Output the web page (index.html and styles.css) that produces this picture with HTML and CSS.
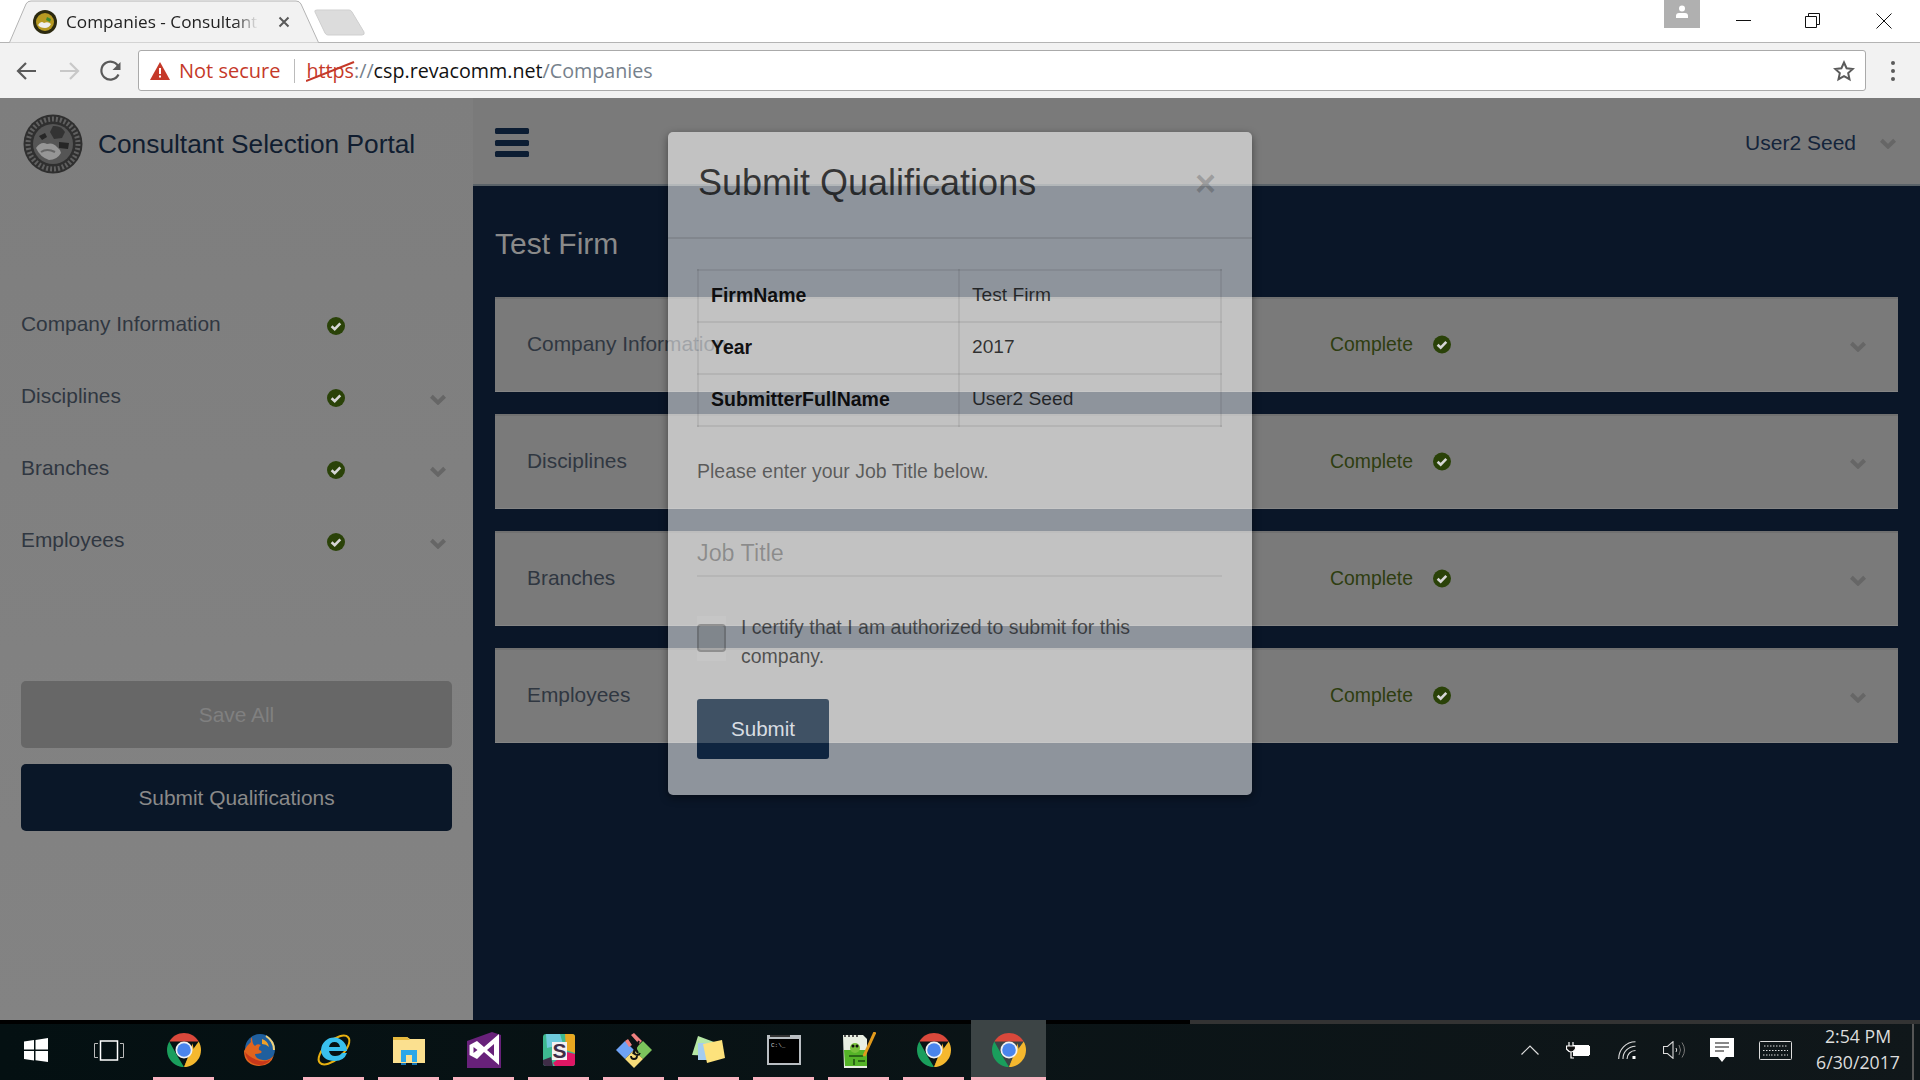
FILE: index.html
```html
<!DOCTYPE html>
<html lang="en">
<head>
    <meta charset="UTF-8">
    <title>Companies - Consultant Selection Portal</title>
    <link rel="stylesheet" href="styles.css">
</head>

<body>
    <!-- shared icons -->
    <svg class="defs" width="0" height="0">
        <symbol id="check" viewBox="0 0 18 18">
            <circle cx="9" cy="9" r="9" fill="#2a4208"/>
            <path d="M4.6 9.2l3.1 3 5.6-5.8" fill="none" stroke="#d6d6d6" stroke-width="2.6"/>
        </symbol>
        <symbol id="chev" viewBox="0 0 16 11">
            <path d="M1.4 2.2L8 8.600l6.600-6.400" fill="none" stroke="#666" stroke-width="4"/>
        </symbol>
        <symbol id="chrome" viewBox="0 0 40 40">
            <path d="M2.7 10a20 20 0 0 1 34.6 0H20z" fill="#d9483b"/>
            <path d="M37.3 10A20 20 0 0 1 20 40l10-20z" fill="#f5b82e"/>
            <path d="M20 40A20 20 0 0 1 2.7 10l10 18z" fill="#1a9e5c"/>
            <path d="M11 15h20l-11 6z" fill="#d9483b"/>
            <path d="M30 12l2 10-12 18 8-20z" fill="#f5b82e"/>
            <circle cx="20" cy="20" r="10" fill="#f2f2f2"/>
            <circle cx="20" cy="20" r="8" fill="#4a85ec"/>
        </symbol>
    </svg>

    <div class="screen">
        <!-- browser chrome -->
        <div class="tabstrip">
            <div class="tab">
                <svg class="tab-shape" width="310" height="43" viewBox="0 0 310 43">
                    <path d="M0.5 42.5L17 4Q18.500 1 22 1H287Q290.500 1 292 4L309.500 42.500" fill="#f2f2f2" stroke="#b4b4b4"/>
                </svg>
                <svg class="favicon" width="24" height="24" viewBox="0 0 24 24">
                    <circle cx="12" cy="12" r="12" fill="#2c2a10"/>
                    <circle cx="12" cy="12" r="9" fill="#b79a22"/>
                    <path d="M5 15q3-5 6-2 4-2 7 1-2 4-6 4-5 0-7-3z" fill="#eee"/>
                    <path d="M14 7l4 2-1 3-4-2z" fill="#3c8a32"/>
                </svg>
                <span class="tab-title">Companies - Consultant Selection Portal</span>
                <svg class="tab-x" width="12" height="12" viewBox="0 0 12 12">
                    <path d="M1.500 1.500l9 9M10.500 1.500l-9 9" stroke="#5a5a5a" stroke-width="2"/>
                </svg>
            </div>
            <svg class="newtab" width="52" height="27" viewBox="0 0 52 27">
                <path d="M3 1H35Q37 1 38 3L50 23Q51 26 48 26H14Q12 26 11 24L1 3Q0 1 3 1z" fill="#dcdcdc" stroke="#cfcfcf"/>
            </svg>
            <div class="win-controls">
                <div class="profile">
                    <svg width="16" height="16" viewBox="0 0 16 16">
                        <circle cx="8" cy="4.500" r="3" fill="#fff"/>
                        <path d="M2 14v-2q0-3 3-3h6q3 0 3 3v2z" fill="#fff"/>
                    </svg>
                </div>
                <svg class="win-btn" width="16" height="16" viewBox="0 0 16 16"><path d="M0 7.500h15" stroke="#111"/></svg>
                <svg class="win-btn" width="16" height="16" viewBox="0 0 16 16"><path d="M.5 3.500h11v11H.5zM3.500 3.500v-3h11v11h-3" fill="none" stroke="#111"/></svg>
                <svg class="win-btn" width="16" height="16" viewBox="0 0 16 16"><path d="M.5.500l15 15M15.500.500l-15 15" stroke="#111"/></svg>
            </div>
        </div>

        <div class="toolbar">
            <svg class="nav-btn" width="42" height="24" viewBox="0 0 42 24"><path d="M30 12H13M20 4l-8 8 8 8" fill="none" stroke="#5a5a5a" stroke-width="2.200"/></svg>
            <svg class="nav-btn" width="42" height="24" viewBox="0 0 42 24"><path d="M12 12h17M22 4l8 8-8 8" fill="none" stroke="#c8c8c8" stroke-width="2.200"/></svg>
            <svg class="nav-btn" width="42" height="24" viewBox="0 0 42 24"><path d="M28.500 15.500a9 9 0 1 1 .5-6.500" fill="none" stroke="#5a5a5a" stroke-width="2.200"/><path d="M30.500 3v8h-8z" fill="#5a5a5a"/></svg>
            <div class="omnibox">
                <svg class="warn" width="20" height="18" viewBox="0 0 20 18"><path d="M10 0l10 18H0z" fill="#c53929"/><path d="M9 6h2v6H9zM9 13.500h2v2H9z" fill="#fff"/></svg>
                <span class="not-secure">Not secure</span>
                <span class="omni-sep"></span>
                <span class="url">
                    <span class="url-https">https</span><span class="url-dim">://</span><span class="url-host">csp.revacomm.net</span><span class="url-dim">/Companies</span>
                    <svg class="url-strike" width="50" height="22" viewBox="0 0 50 22"><path d="M0 20L48 1" stroke="#c53929" stroke-width="2"/></svg>
                </span>
                <svg class="star" width="22" height="22" viewBox="0 0 22 22"><path d="M11 2.500l2.600 5.700 6.200.7-4.600 4.200 1.300 6.100L11 16.100l-5.500 3.100 1.300-6.100-4.600-4.200 6.200-.7z" fill="none" stroke="#5a5a5a" stroke-width="2"/></svg>
            </div>
            <div class="menu-dots"><i></i><i></i><i></i></div>
        </div>

        <!-- the page, dimmed by the modal -->
        <div class="app">
            <aside class="sidebar">
                <div class="brand">
                    <svg class="seal" width="60" height="60" viewBox="0 0 60 60">
                        <circle cx="30" cy="30" r="29.500" fill="#2f2f2f"/>
                        <circle cx="30" cy="30" r="25" fill="none" stroke="#606060" stroke-width="5" stroke-dasharray="2 2"/>
                        <circle cx="30" cy="30" r="20" fill="#555"/>
                        <path d="M30 12q8-1 12 6l-3 6-8 1-4-7z" fill="#333"/>
                        <path d="M36 28l10 1-1 6-9-1zM16 22l6-3 2 4-5 3z" fill="#262626"/>
                        <path d="M13 34q5-7 11-4 6-2 10 3 3 2 4 6-4 7-12 7-9-3-13-12z" fill="#969696"/>
                        <path d="M18 38q6-4 14 0" fill="none" stroke="#666" stroke-width="2"/>
                    </svg>
                    <span class="brand-name">Consultant Selection Portal</span>
                </div>
                <ul class="steps">
                    <li class="step">
                        <span>Company Information</span>
                        <svg class="ico-check" width="18" height="18"><use href="#check"/></svg>
                    </li>
                    <li class="step">
                        <span>Disciplines</span>
                        <svg class="ico-check" width="18" height="18"><use href="#check"/></svg>
                        <svg class="ico-chev" width="16" height="11"><use href="#chev"/></svg>
                    </li>
                    <li class="step">
                        <span>Branches</span>
                        <svg class="ico-check" width="18" height="18"><use href="#check"/></svg>
                        <svg class="ico-chev" width="16" height="11"><use href="#chev"/></svg>
                    </li>
                    <li class="step">
                        <span>Employees</span>
                        <svg class="ico-check" width="18" height="18"><use href="#check"/></svg>
                        <svg class="ico-chev" width="16" height="11"><use href="#chev"/></svg>
                    </li>
                </ul>
                <div class="side-actions">
                    <div class="side-btn side-btn-off">Save All</div>
                    <div class="side-btn side-btn-on">Submit Qualifications</div>
                </div>
            </aside>

            <main class="content">
                <header class="topbar">
                    <div class="burger"><i></i><i></i><i></i></div>
                    <div class="user">
                        <span>User2 Seed</span>
                        <svg width="16" height="11"><use href="#chev"/></svg>
                    </div>
                </header>
                <div class="content-body">
                    <h1 class="firm">Test Firm</h1>
                    <div class="card">
                        <span>Company Information</span>
                        <span class="status">Complete <svg width="18" height="19"><use href="#check"/></svg></span>
                        <svg class="card-chev" width="16" height="11"><use href="#chev"/></svg>
                    </div>
                    <div class="card">
                        <span>Disciplines</span>
                        <span class="status">Complete <svg width="18" height="19"><use href="#check"/></svg></span>
                        <svg class="card-chev" width="16" height="11"><use href="#chev"/></svg>
                    </div>
                    <div class="card">
                        <span>Branches</span>
                        <span class="status">Complete <svg width="18" height="19"><use href="#check"/></svg></span>
                        <svg class="card-chev" width="16" height="11"><use href="#chev"/></svg>
                    </div>
                    <div class="card">
                        <span>Employees</span>
                        <span class="status">Complete <svg width="18" height="19"><use href="#check"/></svg></span>
                        <svg class="card-chev" width="16" height="11"><use href="#chev"/></svg>
                    </div>
                </div>
            </main>

            <!-- modal -->
            <div class="modal">
                <div class="modal-head">
                    <h2>Submit Qualifications</h2>
                    <span class="modal-x">&times;</span>
                </div>
                <div class="modal-body">
                    <table class="summary">
                        <tr><th>FirmName</th><td>Test Firm</td></tr>
                        <tr><th>Year</th><td>2017</td></tr>
                        <tr><th>SubmitterFullName</th><td>User2 Seed</td></tr>
                    </table>
                    <p class="hint">Please enter your Job Title below.</p>
                    <div class="job-input">Job Title</div>
                    <div class="certify">
                        <span class="box-wrap"><span class="box"></span></span>
                        <span class="certify-text">I certify that I am authorized to submit for this company.</span>
                    </div>
                    <div class="submit-btn">Submit</div>
                </div>
            </div>
        </div>

        <!-- windows taskbar -->
        <div class="taskbar">
            <div class="tb-edge"></div>
            <div class="tb-row">
                <div class="tb-start">
                    <svg width="24" height="24" viewBox="0 0 24 24"><path d="M0 3.500l10-1.400v9.400H0zM11.500 1.900L24 0v11.500H11.500zM0 13h10v9.400L0 21zM11.500 13H24v11l-12.500-1.800z" fill="#fff"/></svg>
                </div>
                <div class="tb-view">
                    <svg width="30" height="21" viewBox="0 0 30 21"><path d="M6.500 1h17v19h-17z" fill="none" stroke="#fff" stroke-width="1.500"/><path d="M4 3.500H.5v14H4M26 3.500h3.500v14H26" fill="none" stroke="#bbb"/></svg>
                </div>
                <div class="tb-item tb-open"><svg width="34" height="34"><use href="#chrome"/></svg></div>
                <div class="tb-item">
                    <svg width="34" height="34" viewBox="0 0 34 34">
                        <circle cx="18" cy="16" r="15" fill="#1f5f9e"/>
                        <path d="M24 3q8 5 8 14" fill="none" stroke="#f2d27a" stroke-width="2"/>
                        <path d="M10 4q-2 3-1 5-4 3-7 9 0 14 15 15 12 0 15-11-4 6-11 5-8-1-8-6 3 0 6-1 2-2-2-3-1-3 2-5-4-2-6 1-3-2-3-9z" fill="#e0641e"/>
                        <path d="M3 19q1 11 14 13 8 0 12-6-7 4-14 1-8-3-12-8z" fill="#c8371a"/>
                        <path d="M20 6q6 2 7 8-3-3-7-3z" fill="#f0a028"/>
                    </svg>
                </div>
                <div class="tb-item tb-open">
                    <svg width="36" height="36" viewBox="0 0 36 36">
                        <ellipse cx="18" cy="18" rx="19" ry="9" transform="rotate(-42 18 18)" fill="none" stroke="#e8b010" stroke-width="2"/>
                        <path d="M5 18a13 13 0 1 1 26 1H13q1 5 6 5 5 0 7-3h5q-3 8-12 8Q6 29 5 18zm8-3h11q-1-5-5.500-5T13 15z" fill="#39c0ee"/>
                    </svg>
                </div>
                <div class="tb-item tb-open">
                    <svg width="34" height="30" viewBox="0 0 34 30">
                        <path d="M1 2h14l3 2h15v24H1z" fill="#fbe08f"/>
                        <path d="M1 2h14l3 3H1z" fill="#e6b93e"/>
                        <path d="M9 27V15h16v12h-5v-7h-6v7z" fill="#2aa7e8"/>
                        <path d="M9 28h5v2H9zM20 28h5v2h-5z" fill="#1578b8"/>
                    </svg>
                </div>
                <div class="tb-item tb-open">
                    <svg width="34" height="36" viewBox="0 0 34 36">
                        <path d="M0 9L25 0l9 3v33H0z" fill="#68217a"/>
                        <path fill-rule="evenodd" d="M2.500 13L10 9l7 6L32 2v31L17 20l-7 7-7.500-4zM6.500 15v6l4-3zM20 18l7 6V12z" fill="#fff"/>
                    </svg>
                </div>
                <div class="tb-item tb-open">
                    <svg width="32" height="32" viewBox="0 0 32 32">
                        <rect width="32" height="32" rx="3" fill="#3eb890"/>
                        <path d="M3 0h14l3 10L4 14z" fill="#6ecadc"/>
                        <path d="M22 0h7q3 0 3 3v16l-9-3z" fill="#e9a820"/>
                        <path d="M32 20v9q0 3-3 3H12l-2-3 14-11z" fill="#e01765"/>
                        <path d="M0 26l8-3 2 9H3q-3 0-3-3z" fill="#3f2d47"/>
                        <rect x="9" y="8" width="15" height="18" fill="#f4f0f2"/>
                        <text class="slack-s" x="16.500" y="24">S</text>
                    </svg>
                </div>
                <div class="tb-item tb-open">
                    <svg width="36" height="36" viewBox="0 0 36 36">
                        <path d="M9 9l9 9-9 9-9-9z" fill="#6ea2f5"/>
                        <path d="M27 9l9 9-9 9-9-9z" fill="#7cc35c"/>
                        <path d="M18 18l9 9-9 9-9-9z" fill="#f7dc7a"/>
                        <path d="M15 3l3-2 8 8-3 3zM9 9l3-2 4 6-3 2z" fill="#f08080"/>
                        <path d="M13 5l9 16M23 9l-6 13" fill="none" stroke="#111" stroke-width="2"/>
                        <path d="M15 24a3 3 0 1 0 6 0M21 17a3 3 0 1 0 3 4" fill="none" stroke="#111" stroke-width="1.800"/>
                    </svg>
                </div>
                <div class="tb-item tb-open">
                    <svg width="34" height="28" viewBox="0 0 34 28">
                        <path d="M6 0l16 6-2 14-20-1z" fill="#b5e6a5"/>
                        <path d="M6 7h21v15l-12 2H6z" fill="#a4ccef"/>
                        <path d="M11 8l19-4 3 18-18 5z" fill="#fde27c"/>
                    </svg>
                </div>
                <div class="tb-item tb-open">
                    <svg width="34" height="30" viewBox="0 0 34 30">
                        <rect width="34" height="30" fill="#b9bec2"/>
                        <rect x="2" y="4" width="30" height="24" fill="#000"/>
                        <path d="M3 0h20v2H3z" fill="#333"/>
                        <text class="cmd-prompt" x="4" y="12">C:\_</text>
                    </svg>
                </div>
                <div class="tb-item tb-open">
                    <svg width="34" height="36" viewBox="0 0 34 36">
                        <path d="M1 3h20l4 4v29H2z" fill="#e8efe2"/>
                        <path d="M2 3h2v2H2zM6 3h2v2H6zM10 3h2v2h-2zM14 3h2v2h-2z" fill="#555"/>
                        <path d="M2 18h23v16H3z" fill="#55b428"/>
                        <circle cx="13" cy="16" r="5" fill="#78c23c"/>
                        <circle cx="11" cy="14" r="1.500" fill="#111"/>
                        <circle cx="15" cy="14" r="1.500" fill="#111"/>
                        <path d="M7 24h14M12 27v6M16 29h7" stroke="#1d4d10" stroke-width="1.500"/>
                        <path d="M33 0L22 24" stroke="#e29a1c" stroke-width="3"/>
                    </svg>
                </div>
                <div class="tb-item tb-open"><svg width="34" height="34"><use href="#chrome"/></svg></div>
                <div class="tb-item tb-open tb-active"><svg width="34" height="34"><use href="#chrome"/></svg></div>

                <div class="tray">
                    <svg width="18" height="10" viewBox="0 0 18 10"><path d="M.5 9.500L9 1l8.500 8.500" fill="none" stroke="#ddd" stroke-width="1.200"/></svg>
                    <svg width="24" height="17" viewBox="0 0 24 17">
                        <path d="M7 3h16v1h1v9h-1v1H7z" fill="#fff"/>
                        <path d="M3 0v4M7 0v4M.5 4h9v3q-2 3-4.500 3Q3 10 .5 7zM5 10v6h3" fill="#111" stroke="#fff" stroke-width="1.200"/>
                    </svg>
                    <svg width="18" height="18" viewBox="0 0 18 18">
                        <path d="M.7 18A17 17 0 0 1 17.500.7M5 18A12.500 12.500 0 0 1 17.500 5.200M9 18A8.500 8.500 0 0 1 17.500 9.500" fill="none" stroke="#ddd" stroke-width="1.100"/>
                        <path d="M14.500 15h3v3h-3z" fill="#fff"/>
                    </svg>
                    <svg width="23" height="18" viewBox="0 0 23 18">
                        <path d="M.5 5.500h4L10 .7v16.600L4.500 12.500h-4z" fill="none" stroke="#ddd" stroke-width="1.100"/>
                        <path d="M13 7q1.500 2 0 4" fill="none" stroke="#ddd"/>
                        <path d="M16 4q3 5 0 10M19 1.500q5 7.500 0 15" fill="none" stroke="#777"/>
                    </svg>
                    <svg width="24" height="24" viewBox="0 0 24 24">
                        <path d="M0 0h24v19h-8l-4 5-4-5H0z" fill="#fff"/>
                        <path d="M5 5h14M5 9h14M5 13h9" stroke="#111" stroke-width="1.200"/>
                    </svg>
                    <svg width="33" height="19" viewBox="0 0 33 19">
                        <rect x=".5" y=".5" width="32" height="18" rx="1" fill="none" stroke="#ddd"/>
                        <path d="M5 5h23M4 9.500h25M4 14h7M12 14h9M22 14h7" stroke="#ddd" stroke-dasharray="1.500 1.500"/>
                    </svg>
                    <div class="clock"><span>2:54 PM</span><span>6/30/2017</span></div>
                </div>
                <div class="show-desktop"></div>
            </div>
        </div>
    </div>
</body>

</html>
```

FILE: styles.css
```css
* {
    margin: 0;
    padding: 0;
    box-sizing: border-box;
}

html, body {
    width: 1920px;
    height: 1080px;
    overflow: hidden;
}

body {
    font-family: "Liberation Sans", Arial, sans-serif;
    background-color: #fff;
}

.defs {
    position: absolute;
}

.screen {
    display: flex;
    flex-direction: column;
    height: 1080px;
}

/* browser chrome */
.tabstrip {
    display: flex;
    height: 43px;
    padding-left: 9px;
    background-color: #fff;
    border-bottom: 1px solid #b4b4b4;
}

.tab {
    position: relative;
    display: flex;
    align-items: center;
    width: 310px;
    height: 43px;
    padding: 0 0 0 24px;
}

.tab-shape {
    position: absolute;
    left: 0;
    top: 0;
}

.favicon, .tab-title, .tab-x {
    position: relative;
}

.tab-title {
    width: 192px;
    margin: -1px 0 0 9px;
    overflow: hidden;
    white-space: nowrap;
    font-family: "Open Sans", sans-serif;
    font-size: 17.200px;
    color: #222;
    -webkit-mask-image: linear-gradient(to right, #000 88%, transparent);
    mask-image: linear-gradient(to right, #000 88%, transparent);
}

.tab-x {
    margin-left: 20px;
}

.newtab {
    margin: 9px 0 0 -5px;
}

.win-controls {
    display: flex;
    margin-left: auto;
}

.profile {
    display: flex;
    justify-content: center;
    padding-top: 4px;
    width: 36px;
    height: 28px;
    background-color: #b0b0b0;
}

.win-btn {
    margin: 13px 0 0 36px;
}

.win-btn:nth-child(2) {
    margin-left: 36px;
}

.win-btn:nth-child(3) {
    margin-left: 53px;
}

.win-btn:nth-child(4) {
    margin: 13px 28px 0 55px;
}

.toolbar {
    display: flex;
    align-items: center;
    height: 55px;
    padding: 0 0 0 6px;
    background-color: #f2f2f2;
}

.nav-btn {
    flex: none;
}

.omnibox {
    display: flex;
    align-items: center;
    flex: 1;
    height: 41px;
    margin: 0 0 0 6px;
    padding: 0 10px 0 11px;
    background-color: #fff;
    border: 1px solid #aaa;
    border-radius: 3px;
    font-family: "Open Sans", sans-serif;
    font-size: 19.700px;
}

.not-secure {
    margin-left: 9px;
    font-size: 20px;
    color: #c53929;
    white-space: nowrap;
}

.omni-sep {
    width: 1px;
    height: 24px;
    margin: 0 11px 0 14px;
    background-color: #bbb;
}

.url {
    position: relative;
    white-space: nowrap;
    color: #777;
}

.url-https {
    color: #c53929;
}

.url-dim {
    color: #76818c;
}

.url-host {
    color: #111;
}

.url-strike {
    position: absolute;
    left: 0;
    top: 4px;
}

.star {
    margin-left: auto;
}

.menu-dots {
    display: flex;
    flex-direction: column;
    align-items: center;
    gap: 4px;
    width: 54px;
}

.menu-dots i {
    width: 4px;
    height: 4px;
    border-radius: 50%;
    background-color: #5a5a5a;
}

/* page */
.app {
    position: relative;
    display: flex;
    height: 922px;
    background-color: #0a1628;
}

.sidebar {
    width: 473px;
    background-image: linear-gradient(#7e7e7e, #838383);
    color: #303741;
}

.brand {
    display: flex;
    align-items: center;
    height: 88px;
    padding: 3px 0 0 23px;
}

.brand-name {
    margin: 1px 0 0 15px;
    font-size: 26.300px;
    color: #101d30;
}

.steps {
    list-style: none;
    margin-top: 102px;
}

.step {
    display: grid;
    grid-template-columns: 306px 18px 1fr;
    align-items: center;
    height: 72px;
    padding-left: 21px;
    font-size: 20.900px;
}

.ico-check {
    margin-top: 4px;
}

.ico-chev {
    justify-self: end;
    margin: 6px 27px 0 0;
}

.side-actions {
    display: flex;
    flex-direction: column;
    gap: 16px;
    margin: 105px 21px 0;
}

.side-btn {
    display: flex;
    align-items: center;
    justify-content: center;
    height: 67px;
    padding-top: 1px;
    border-radius: 5px;
    font-size: 20.900px;
}

.side-btn-off {
    background-color: #676767;
    color: #808080;
}

.side-btn-on {
    background-color: #0a1728;
    color: #8a8a8a;
}

.content {
    flex: 1;
}

.topbar {
    display: flex;
    align-items: center;
    justify-content: space-between;
    height: 88px;
    padding: 4px 24px 0 22px;
    background-color: #7a7a7a;
    border-bottom: 2px solid #5a6268;
}

.burger {
    display: flex;
    flex-direction: column;
    gap: 5.500px;
    margin-top: -1px;
}

.burger i {
    width: 34px;
    height: 6px;
    border-radius: 1.500px;
    background-color: #0c1d33;
}

.user {
    display: flex;
    align-items: center;
    gap: 24px;
    font-size: 21px;
    color: #14243a;
}

.content-body {
    padding: 0 22px;
}

.firm {
    height: 34px;
    margin: 41px 0 36px;
    font-size: 30px;
    font-weight: normal;
    line-height: 34px;
    color: #8a8a8a;
}

.card {
    display: grid;
    grid-template-columns: 803px 1fr auto;
    align-items: center;
    height: 95px;
    margin-bottom: 22px;
    padding: 0 32px 2px;
    background-color: #7a7a7a;
    border-top: 2px solid #707070;
    border-bottom: 1px solid #858585;
    font-size: 20.900px;
    color: #303741;
}

.status {
    display: flex;
    align-items: center;
    gap: 20px;
    font-size: 19.400px;
    color: #2e3d10;
}

.card-chev {
    margin-top: 4px;
}

/* modal */
.modal {
    position: absolute;
    left: 668px;
    top: 34px;
    width: 584px;
    height: 663px;
    background-color: rgba(255, 255, 255, .54);
    border-radius: 5px;
    box-shadow: 0 3px 9px rgba(0, 0, 0, .45);
}

.modal-head {
    display: flex;
    align-items: center;
    justify-content: space-between;
    height: 107px;
    padding: 0 36px 0 30px;
    border-bottom: 2px solid rgba(0, 0, 0, .09);
}

.modal-head h2 {
    margin-top: -3px;
    font-size: 36px;
    font-weight: normal;
    color: rgba(0, 0, 0, .72);
}

.modal-x {
    margin-top: -1px;
    font-size: 36px;
    font-weight: bold;
    color: rgba(0, 0, 0, .2);
}

.modal-body {
    padding: 30px 30px 0 29px;
}

.summary {
    width: 100%;
    height: 157px;
    border-collapse: collapse;
    table-layout: fixed;
    font-size: 19.200px;
}

.summary th, .summary td {
    height: 52px;
    padding: 0 12px 2px;
    text-align: left;
    border: 2px solid rgba(0, 0, 0, .07);
    color: rgba(0, 0, 0, .75);
}

.summary th {
    width: 261px;
    font-size: 19.500px;
    color: rgba(0, 0, 0, .92);
}

.hint {
    margin-top: 32px;
    font-size: 19.500px;
    line-height: 24px;
    color: rgba(0, 0, 0, .55);
}

.job-input {
    height: 55px;
    margin-top: 39px;
    padding-top: 16px;
    border-bottom: 2px solid rgba(0, 0, 0, .06);
    font-size: 23.300px;
    line-height: 30px;
    color: rgba(0, 0, 0, .28);
}

.certify {
    display: flex;
    margin-top: 36px;
}

.box-wrap {
    display: block;
    flex: none;
    width: 29px;
    height: 45px;
    margin-top: 3px;
    padding-top: 8px;
    background-color: rgba(255, 255, 255, .08);
}

.box {
    display: block;
    width: 29px;
    height: 28px;
    background-color: rgba(0, 0, 0, .14);
    border: 2px solid rgba(0, 0, 0, .16);
    border-radius: 4px;
}

.certify-text {
    width: 420px;
    margin-left: 15px;
    font-size: 19.500px;
    line-height: 29px;
    color: rgba(0, 0, 0, .6);
}

.submit-btn {
    display: flex;
    align-items: center;
    justify-content: center;
    width: 132px;
    height: 60px;
    margin-top: 28px;
    border-radius: 3px;
    background-image: linear-gradient(#3f5164 44px, #0f2540 44px);
    font-size: 20.600px;
    color: #d8dde2;
}

/* taskbar */
.taskbar {
    height: 60px;
    background-image: linear-gradient(to right, #041012, #10171a);
}

.tb-edge {
    height: 4px;
    background-image: linear-gradient(to right, #000 1190px, #333 1190px);
}

.tb-row {
    display: flex;
    height: 56px;
}

.tb-start {
    display: flex;
    align-items: center;
    justify-content: center;
    width: 71px;
    padding-bottom: 4px;
}

.tb-view {
    display: flex;
    align-items: center;
    justify-content: center;
    width: 75px;
    padding-bottom: 4px;
}

.tb-item {
    display: flex;
    align-items: center;
    justify-content: center;
    width: 75px;
    padding-bottom: 4px;
}

.tb-open {
    background-image: linear-gradient(#f8b3c0, #f8b3c0);
    background-repeat: no-repeat;
    background-size: 61px 3px;
    background-position: center bottom;
}

.tb-active {
    height: 60px;
    margin-top: -4px;
    padding: 4px 0 4px;
    background-image: linear-gradient(#f8b3c0, #f8b3c0), linear-gradient(#3c4445, #3c4445);
    background-size: 75px 3px, 75px 60px;
    background-position: left bottom, left top;
}

.slack-s {
    font-family: "Liberation Sans", sans-serif;
    font-size: 21px;
    font-weight: bold;
    text-anchor: middle;
    fill: #3f2d47;
}

.cmd-prompt {
    font-family: "Liberation Mono", monospace;
    font-size: 6px;
    fill: #ccc;
}

.tray {
    display: grid;
    grid-template-columns: 45px 52px 45px 47px 49px 51px 96px;
    align-items: center;
    margin-left: auto;
    padding-bottom: 4px;
}

.clock {
    display: flex;
    flex-direction: column;
    align-items: center;
    gap: 2px;
    margin-top: -2px;
    font-family: "Open Sans", sans-serif;
    font-size: 17.700px;
    line-height: 24px;
    color: #ddd;
}

.show-desktop {
    width: 2px;
    margin: 0 6px;
    background-color: #555;
}
```
